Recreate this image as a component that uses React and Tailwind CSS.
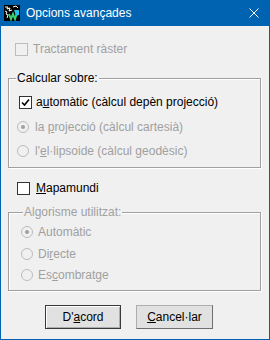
import React from "react";

// petites peces de control a l'estil Windows
function Check({ checked = false, disabled = false }) {
  return (
    <span
      className={`flex h-[13px] w-[13px] shrink-0 items-center justify-center border ${
        disabled ? "border-[#bcbcbc] bg-[#f0f0f0]" : "border-[#333333] bg-white"
      }`}
    >
      {checked && (
        <svg width="11" height="11" viewBox="0 0 11 11">
          <path d="M2 5.5 L4.5 8 L9 2.5" fill="none" stroke="#000" strokeWidth="1.6" />
        </svg>
      )}
    </span>
  );
}

function Radio({ checked = false }) {
  return (
    <span className="flex h-[12px] w-[12px] shrink-0 items-center justify-center rounded-full border border-[#bcbcbc] bg-[#f0f0f0]">
      {checked && <span className="h-[4px] w-[4px] rounded-full bg-[#a0a0a0]" />}
    </span>
  );
}

function Row({ children, className = "" }) {
  return <div className={`flex h-[14px] items-center ${className}`}>{children}</div>;
}

function Group({ title, disabled, legendClass, className = "", children }) {
  return (
    <fieldset
      className={`ml-[7px] w-[253px] border border-[#a0a0a0] shadow-[1px_1px_0_#fff,inset_1px_1px_0_#fff] ${className}`}
    >
      <legend
        className={`h-[14px] bg-[#f0f0f0] px-[1px] leading-[14px] ${legendClass} ${
          disabled ? "text-[#a0a0a0]" : "text-black"
        }`}
      >
        {title}
      </legend>
      {children}
    </fieldset>
  );
}

export default function App() {
  return (
    <div className="flex h-[340px] w-[270px] flex-col bg-[#0063b1] font-['Liberation_Sans',Arial,sans-serif] text-[12px] leading-[14px] text-black">
      {/* barra de títol */}
      <div className="flex h-[26px] shrink-0 items-center pl-[4px] pr-[11px] text-white">
        <svg width="16" height="16" viewBox="0 0 16 16">
          <rect width="16" height="16" fill="#000" />
          <path d="M1 2 L4 2 L3 4 L6 3 L5 6 L8 5" fill="none" stroke="#fff" strokeWidth="1" />
          <path d="M1 6 L3 7 L2 9 L4 10 L3 13" fill="none" stroke="#fff" strokeWidth="1" />
          <path d="M9 2 L12 1 L14 3" fill="none" stroke="#fff" strokeWidth="1" />
          <path d="M5 9 L7 14 L9 9 L11 14 L13 8" fill="none" stroke="#3cd070" strokeWidth="2" />
          <path d="M10 5 L15 5 L15 10 L12 11 Z" fill="#22c0e8" />
        </svg>
        <span className="ml-[6px] flex-1">Opcions avançades</span>
        <svg width="10" height="10" viewBox="0 0 10 10">
          <path d="M0.5 0.5 L9.5 9.5 M9.5 0.5 L0.5 9.5" stroke="#fff" strokeWidth="1" />
        </svg>
      </div>

      {/* cos del diàleg */}
      <div className="mx-[1px] mb-[1px] flex flex-1 flex-col bg-[#f0f0f0]">
        <Row className="ml-[14px] mt-[16px] gap-[5px] text-[#a0a0a0]">
          <Check disabled />
          <span>Tractament ràster</span>
        </Row>

        <Group title="Calcular sobre:" legendClass="ml-[7px]" className="mt-[15px] pb-[9px]">
          <Row className="ml-[10px] mt-[10px] gap-[4px]">
            <Check checked />
            <span>
              a<u>u</u>tomàtic (càlcul depèn projecció)
            </span>
          </Row>
          <Row className="ml-[8px] mt-[11px] gap-[6px] text-[#a0a0a0]">
            <Radio checked />
            <span>
              la <u>p</u>rojecció (càlcul cartesià)
            </span>
          </Row>
          <Row className="ml-[8px] mt-[10px] gap-[6px] text-[#a0a0a0]">
            <Radio />
            <span>
              l'<u>e</u>l·lipsoide (càlcul geodèsic)
            </span>
          </Row>
        </Group>

        <Row className="ml-[16px] mt-[13px] gap-[6px]">
          <Check />
          <span>
            <u>M</u>apamundi
          </span>
        </Row>

        <Group title="Algorisme utilitzat:" disabled legendClass="ml-[14px]" className="mt-[10px] pb-[8px]">
          <Row className="ml-[12px] mt-[6px] gap-[5px] text-[#a0a0a0]">
            <Radio checked />
            <span>Automàtic</span>
          </Row>
          <Row className="ml-[12px] mt-[8px] gap-[5px] text-[#a0a0a0]">
            <Radio />
            <span>
              Di<u>r</u>ecte
            </span>
          </Row>
          <Row className="ml-[12px] mt-[7px] gap-[5px] text-[#a0a0a0]">
            <Radio />
            <span>
              Es<u>c</u>ombratge
            </span>
          </Row>
        </Group>

        <div className="ml-[44px] mt-[14px] flex gap-[15px]">
          <button className="flex h-[24px] w-[76px] items-center justify-center border border-[#3a3a3a] bg-[#e1e1e1] shadow-[inset_1px_1px_0_#fff,inset_-1px_-1px_0_#adadad]">
            D'<u>a</u>cord
          </button>
          <button className="flex h-[24px] w-[77px] items-center justify-center border border-[#adadad] border-b-[#6f6f6f] border-r-[#6f6f6f] bg-[#e1e1e1]">
            <span>
              <u>C</u>ancel·lar
            </span>
          </button>
        </div>
      </div>
    </div>
  );
}
